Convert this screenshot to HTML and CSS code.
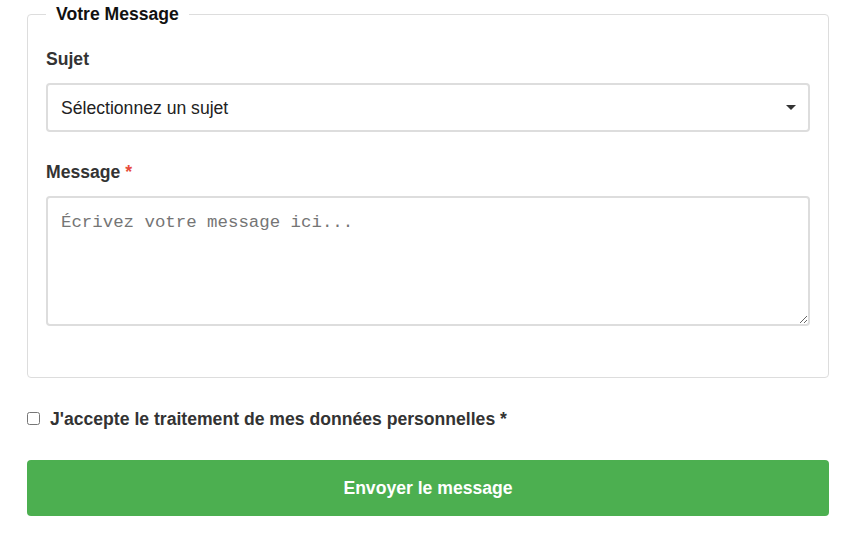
FILE: index.html
```html
<!DOCTYPE html>
<html lang="fr">
<head>
<meta charset="utf-8">
<title>Votre Message</title>
<link rel="stylesheet" href="styles.css">
</head>
<body>
<form class="form">
  <fieldset class="group">
    <legend class="legend">Votre Message</legend>
    <div class="field">
      <label class="label" for="sujet">Sujet</label>
      <div class="select-wrap">
        <select id="sujet" class="select">
          <option>Sélectionnez un sujet</option>
        </select>
        <span class="caret"></span>
      </div>
    </div>
    <div class="field">
      <label class="label" for="msg">Message <span class="req">*</span></label>
      <textarea id="msg" class="textarea" placeholder="Écrivez votre message ici..."></textarea>
    </div>
  </fieldset>
  <div class="consent">
    <input type="checkbox" id="ok" class="check">
    <label for="ok" class="consent-label">J'accepte le traitement de mes données personnelles *</label>
  </div>
  <button type="button" class="submit">Envoyer le message</button>
</form>
</body>
</html>
```
FILE: styles.css
```css
html, body {
  margin: 0;
  background: #fff;
  font-family: "Liberation Sans", Arial, sans-serif;
  color: #333;
}
.form {
  padding: 4px 26px 0 27px;
  display: flex;
  flex-direction: column;
}
.group {
  margin: 0;
  border: 1px solid #ddd;
  border-radius: 4px;
  padding: 24px 18px 51px 18px;
  display: flex;
  flex-direction: column;
  gap: 30px;
}
.legend {
  padding: 0 10px;
  font-size: 17.6px;
  font-weight: bold;
  color: #111;
}
.field {
  display: flex;
  flex-direction: column;
  gap: 13px;
}
.label {
  font-size: 17.6px;
  font-weight: bold;
  color: #333;
}
.req {
  color: #e74c3c;
}
.select-wrap {
  position: relative;
}
.select {
  width: 100%;
  height: 49px;
  box-sizing: border-box;
  border: 2px solid #ddd;
  border-radius: 4px;
  background: #fff;
  padding: 0 13px;
  font-family: "Liberation Sans", Arial, sans-serif;
  font-size: 17.6px;
  color: #222;
  appearance: none;
  -webkit-appearance: none;
}
.caret {
  position: absolute;
  right: 14px;
  top: 22px;
  width: 0;
  height: 0;
  border-left: 5px solid transparent;
  border-right: 5px solid transparent;
  border-top: 5px solid #333;
  pointer-events: none;
}
.textarea {
  width: 100%;
  height: 130px;
  box-sizing: border-box;
  border: 2px solid #ddd;
  border-radius: 4px;
  padding: 15px 13px 12px;
  font-family: "Liberation Mono", "Courier New", monospace;
  font-size: 17.4px;
  resize: vertical;
  display: block;
}
.textarea::placeholder {
  color: #757575;
}
.consent {
  display: flex;
  align-items: flex-start;
  gap: 10px;
  margin-top: 31px;
}
.check {
  margin: 3px 0 0 0;
  width: 13px;
  height: 13px;
}
.consent-label {
  font-size: 17.6px;
  font-weight: bold;
  color: #333;
}
.submit {
  margin-top: 30px;
  height: 56px;
  border: none;
  border-radius: 4px;
  background: #4caf50;
  color: #fff;
  font-family: "Liberation Sans", Arial, sans-serif;
  font-size: 17.6px;
  font-weight: bold;
}
```
